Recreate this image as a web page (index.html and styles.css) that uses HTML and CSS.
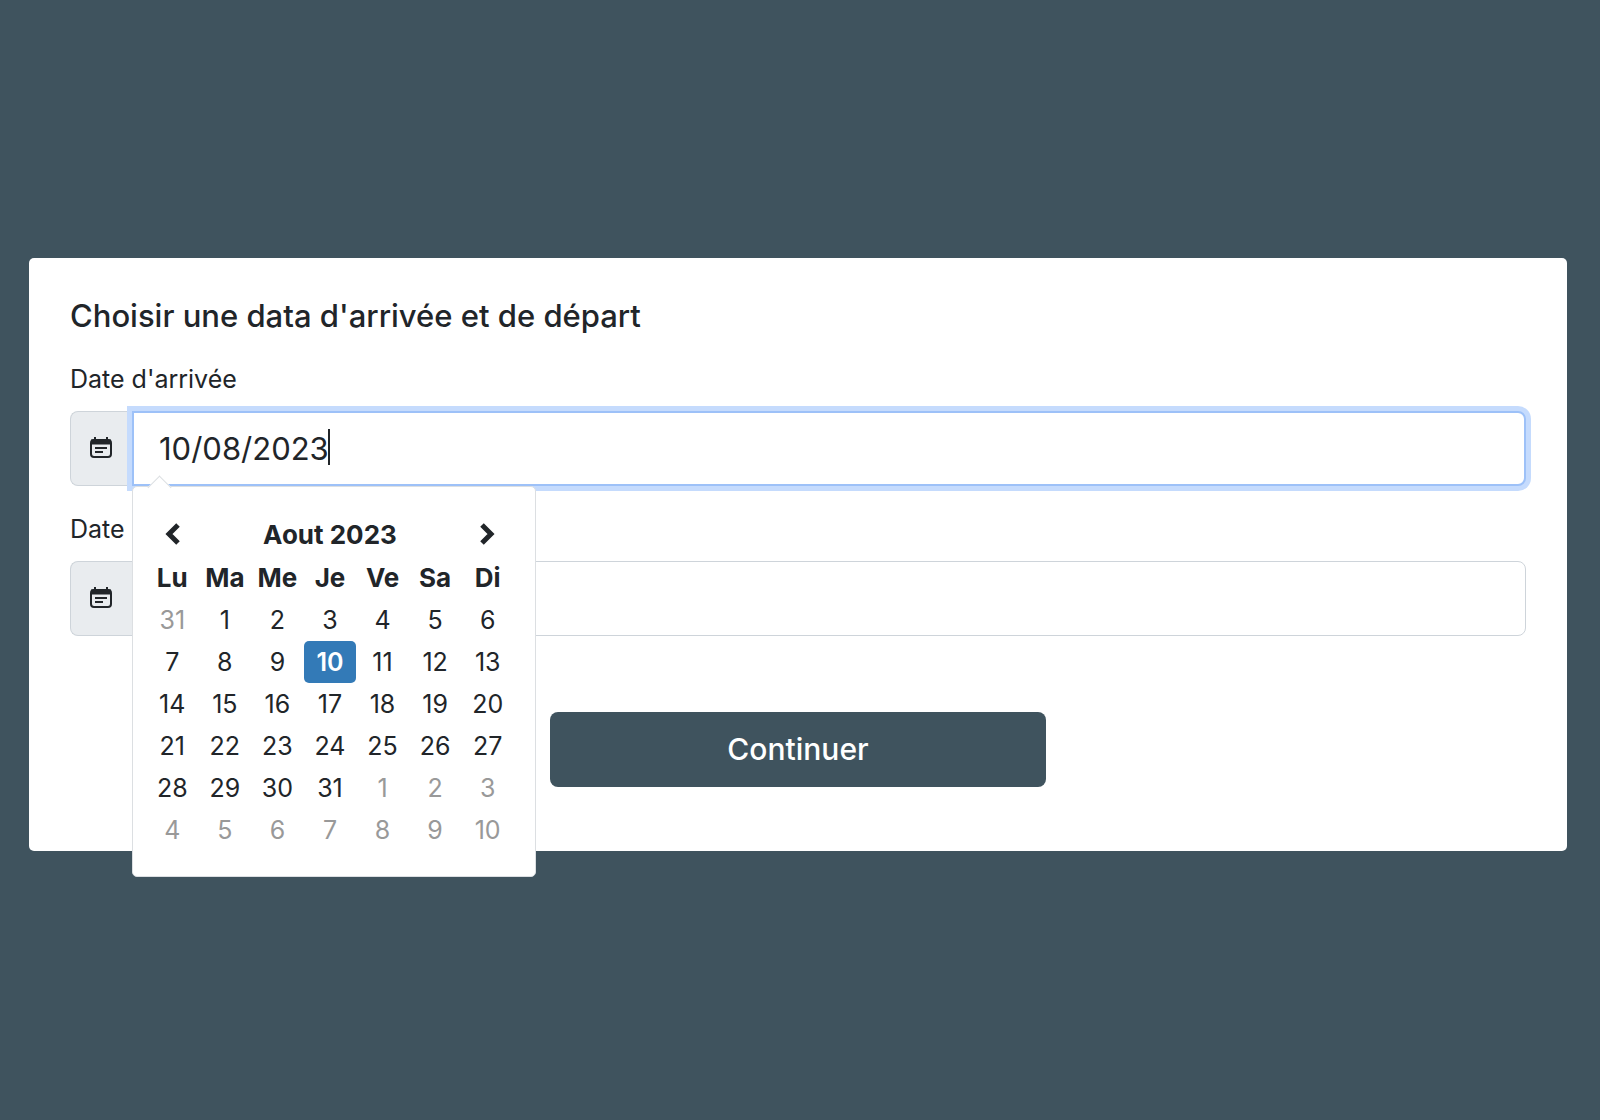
FILE: index.html
```
<!DOCTYPE html>
<html lang="fr">
<head>
  <meta charset="UTF-8">
  <meta name="viewport" content="width=device-width, initial-scale=1.0">
  <title>Réservation</title>
  <link rel="stylesheet" href="styles.css">
</head>
<body>
  <form class="card">
    <h1>Choisir une data d'arrivée et de départ</h1>

    <label for="arrivee">Date d'arrivée</label>
    <div class="input-group">
      <span class="addon">
        <svg class="icon" viewBox="0 0 22 22" fill="none" stroke="#212529">
          <rect x="1" y="3" width="20" height="17" rx="3" stroke-width="2" />
          <path d="M1 5h20" stroke-width="5" />
          <path d="M5 0v4M17 0v4" stroke-width="2" />
          <path d="M5 11h12M5 15h8" stroke-width="2" />
        </svg>
      </span>
      <div class="field">
        <input type="text" id="arrivee" class="active" value="10/08/2023" autocomplete="off">
        <span class="caret"></span>

        <!-- datepicker -->
        <div class="datepicker">
          <table>
            <thead>
              <tr>
                <th>
                  <button type="button" aria-label="Mois précédent">
                    <svg class="arrow" viewBox="0 0 16 24"><path d="M14 3L5 12l9 9" /></svg>
                  </button>
                </th>
                <th colspan="5">Aout 2023</th>
                <th>
                  <button type="button" aria-label="Mois suivant">
                    <svg class="arrow" viewBox="0 0 16 24"><path d="M2 3l9 9-9 9" /></svg>
                  </button>
                </th>
              </tr>
              <tr><th>Lu</th><th>Ma</th><th>Me</th><th>Je</th><th>Ve</th><th>Sa</th><th>Di</th></tr>
            </thead>
            <tbody>
              <tr>
                <td><button type="button" class="other">31</button></td>
                <td><button type="button">1</button></td>
                <td><button type="button">2</button></td>
                <td><button type="button">3</button></td>
                <td><button type="button">4</button></td>
                <td><button type="button">5</button></td>
                <td><button type="button">6</button></td>
              </tr>
              <tr>
                <td><button type="button">7</button></td>
                <td><button type="button">8</button></td>
                <td><button type="button">9</button></td>
                <td><button type="button" class="selected">10</button></td>
                <td><button type="button">11</button></td>
                <td><button type="button">12</button></td>
                <td><button type="button">13</button></td>
              </tr>
              <tr>
                <td><button type="button">14</button></td>
                <td><button type="button">15</button></td>
                <td><button type="button">16</button></td>
                <td><button type="button">17</button></td>
                <td><button type="button">18</button></td>
                <td><button type="button">19</button></td>
                <td><button type="button">20</button></td>
              </tr>
              <tr>
                <td><button type="button">21</button></td>
                <td><button type="button">22</button></td>
                <td><button type="button">23</button></td>
                <td><button type="button">24</button></td>
                <td><button type="button">25</button></td>
                <td><button type="button">26</button></td>
                <td><button type="button">27</button></td>
              </tr>
              <tr>
                <td><button type="button">28</button></td>
                <td><button type="button">29</button></td>
                <td><button type="button">30</button></td>
                <td><button type="button">31</button></td>
                <td><button type="button" class="other">1</button></td>
                <td><button type="button" class="other">2</button></td>
                <td><button type="button" class="other">3</button></td>
              </tr>
              <tr>
                <td><button type="button" class="other">4</button></td>
                <td><button type="button" class="other">5</button></td>
                <td><button type="button" class="other">6</button></td>
                <td><button type="button" class="other">7</button></td>
                <td><button type="button" class="other">8</button></td>
                <td><button type="button" class="other">9</button></td>
                <td><button type="button" class="other">10</button></td>
              </tr>
            </tbody>
          </table>
        </div>
      </div>
    </div>

    <label for="depart">Date</label>
    <div class="input-group">
      <span class="addon">
        <svg class="icon" viewBox="0 0 22 22" fill="none" stroke="#212529">
          <rect x="1" y="3" width="20" height="17" rx="3" stroke-width="2" />
          <path d="M1 5h20" stroke-width="5" />
          <path d="M5 0v4M17 0v4" stroke-width="2" />
          <path d="M5 11h12M5 15h8" stroke-width="2" />
        </svg>
      </span>
      <div class="field">
        <input type="text" id="depart" autocomplete="off">
      </div>
    </div>

    <button type="submit" class="btn">Continuer</button>
  </form>
</body>
</html>
```
FILE: styles.css
```
* {
    margin: 0;
    padding: 0;
    box-sizing: border-box;
    font-family: Inter, "Liberation Sans", sans-serif;
}
body {
    display: flex;
    align-items: center;
    min-height: 100vh;
    padding: 0 33px 12px 29px;
    background-color: #3f535e;
    color: #212529;
}
.card {
    flex: 1;
    padding: 39px 41px 64px;
    background: #fff;
    border-radius: 5px;
}
h1 {
    margin-bottom: 25px;
    font-size: 31px;
    font-weight: 500;
    line-height: 38px;
}
label {
    display: block;
    margin-bottom: 12px;
    font-size: 25px;
    line-height: 39px;
}
.input-group {
    display: flex;
    height: 75px;
    margin-bottom: 24px;
}
.addon {
    display: flex;
    align-items: center;
    justify-content: center;
    width: 62px;
    padding-right: 2px;
    background: #e9ecef;
    border: 1px solid #ced4da;
    border-right: none;
    border-radius: 8px 0 0 8px;
}
.icon {
    width: 22px;
    height: 22px;
}
.field {
    position: relative;
    flex: 1;
}
.field input {
    width: 100%;
    height: 100%;
    padding: 0 26px;
    border: 1px solid #ced4da;
    border-radius: 0 8px 8px 0;
    background: #fff;
    color: #212529;
    font-size: 31px;
    outline: none;
}
.field input.active {
    padding: 0 25px;
    border: 2px solid #9dc1f8;
    box-shadow: 0 0 0 5px #c5dbfd;
}
.caret {
    position: absolute;
    top: 18px;
    left: 196px;
    width: 2px;
    height: 36px;
    background: #212529;
}
.datepicker {
    position: absolute;
    top: 100%;
    left: 0;
    z-index: 10;
    padding: 26px 21px 25px 13px;
    background: #fff;
    border: 1px solid #dcdfe2;
    border-radius: 5px;
}
/* little arrow pointing at the input */
.datepicker::before {
    content: "";
    position: absolute;
    top: -8px;
    left: 18px;
    width: 16px;
    height: 16px;
    background: #fff;
    border-top: 1px solid #dcdfe2;
    border-left: 1px solid #dcdfe2;
    transform: rotate(45deg);
}
table {
    width: 368px;
    table-layout: fixed;
    border-collapse: collapse;
    font-size: 26px;
    text-align: center;
}
th {
    height: 43px;
    font-weight: 700;
}
td {
    height: 42px;
}
table button {
    display: block;
    width: 100%;
    height: 42px;
    border: none;
    border-radius: 5px;
    background: none;
    color: #212529;
    font-size: 25px;
    cursor: pointer;
}
table button.other {
    color: #999;
}
table button.selected {
    background: #337ab7;
    color: #fff;
    font-weight: 600;
}
.arrow {
    display: block;
    width: 16px;
    height: 24px;
    margin: 0 auto;
    fill: none;
    stroke: #212529;
    stroke-width: 5;
}
.btn {
    display: block;
    width: 34%;
    height: 75px;
    margin: 76px auto 0;
    border: none;
    border-radius: 8px;
    background: #3f535e;
    color: #fff;
    font-size: 30px;
    font-weight: 500;
    cursor: pointer;
}
```
